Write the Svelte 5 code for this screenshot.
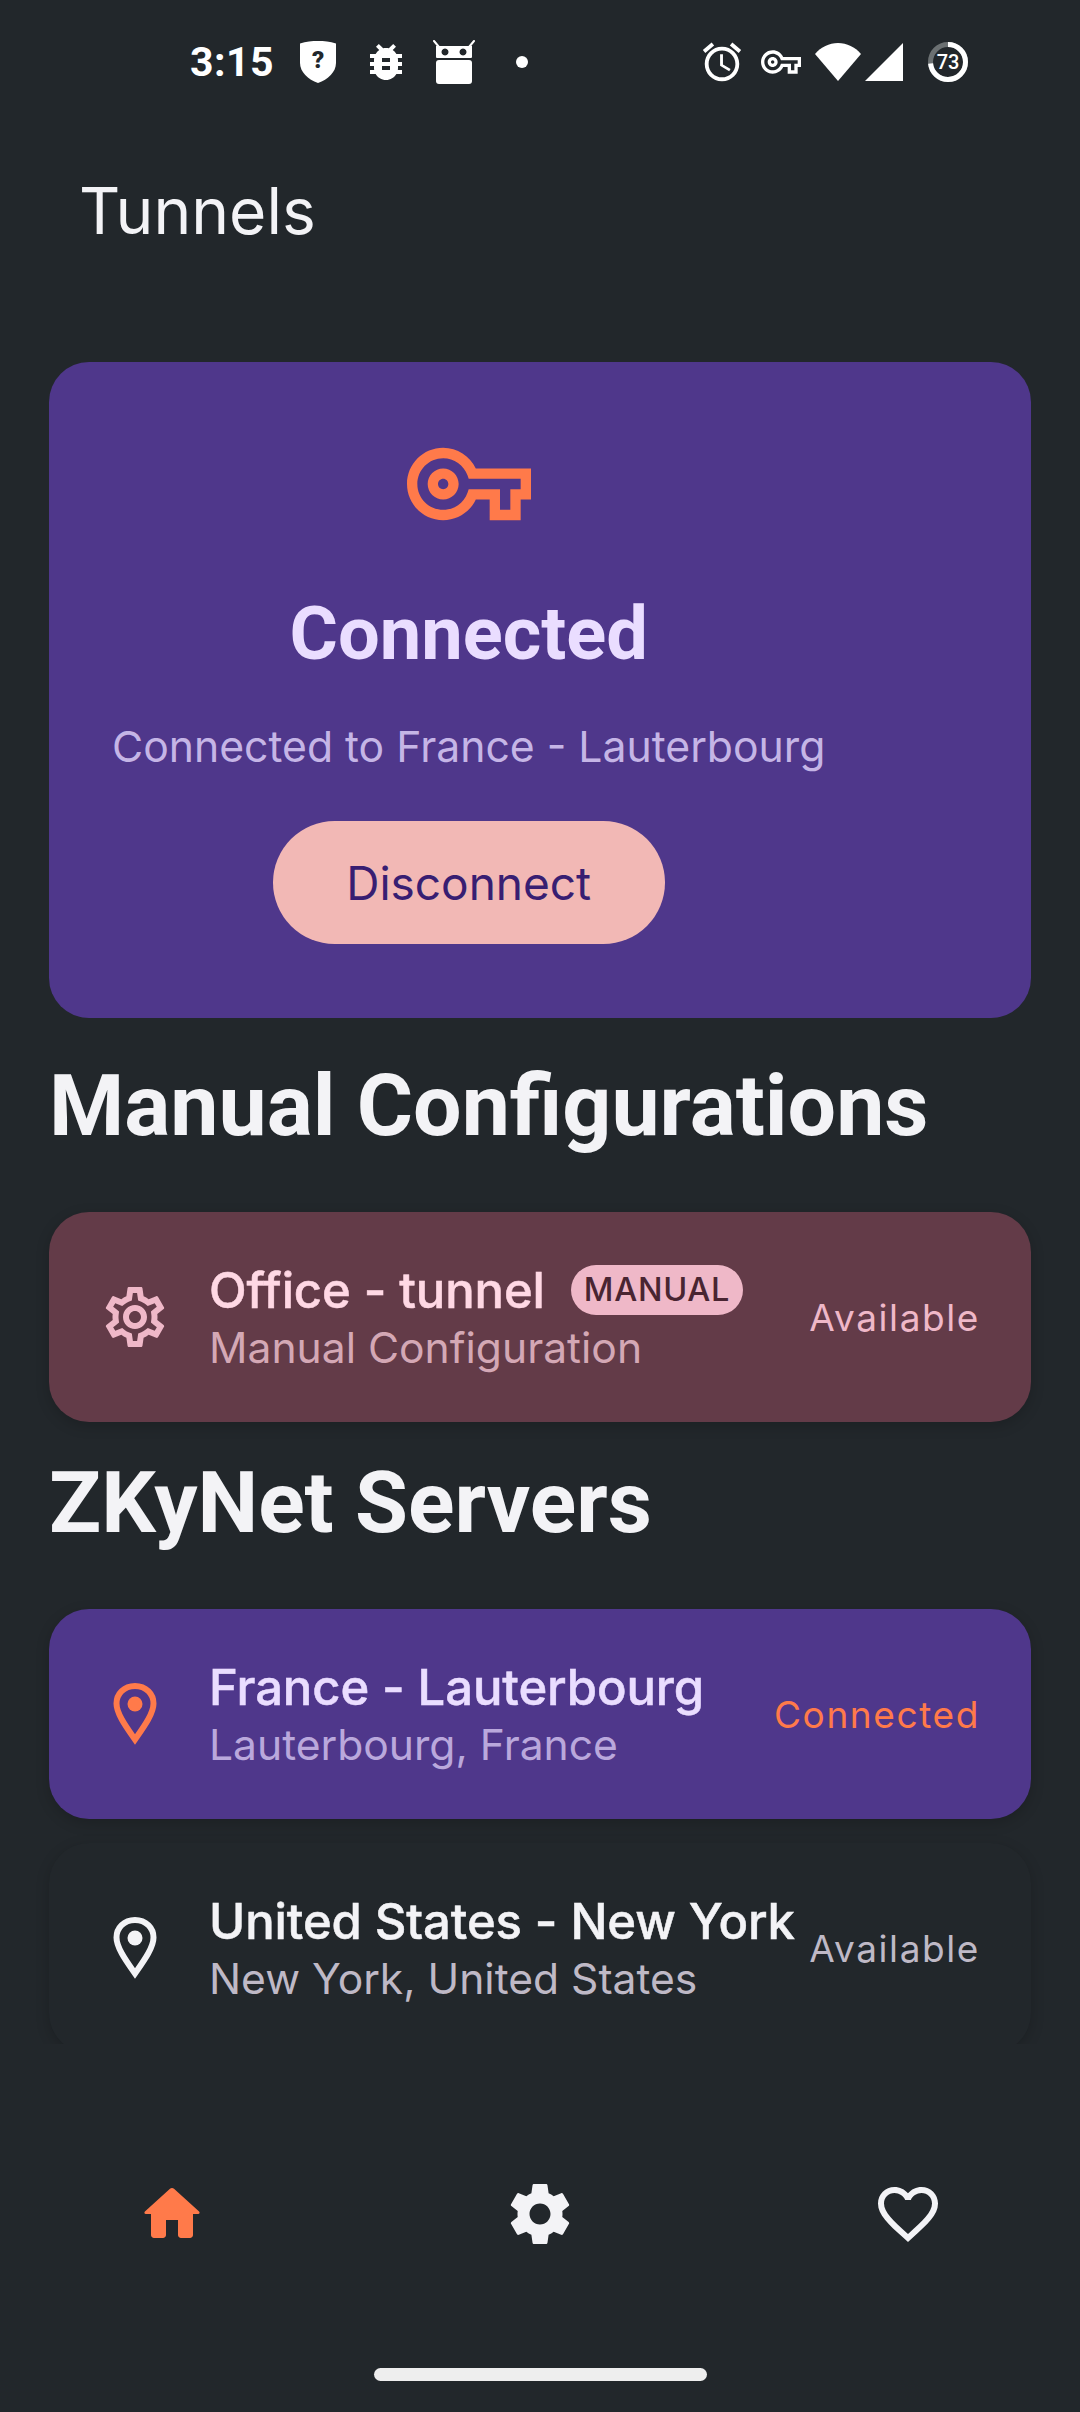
<script>
   // gear outline shared by the manual row and the bottom nav
   const gearOuter = "M19.43 12.98c.04-.32.07-.64.07-.98 0-.34-.03-.66-.07-.98l2.11-1.65c.19-.15.24-.42.12-.64l-2-3.46c-.09-.16-.26-.25-.44-.25-.06 0-.12.01-.17.03l-2.49 1c-.52-.4-1.08-.73-1.69-.98l-.38-2.65C14.46 2.18 14.25 2 14 2h-4c-.25 0-.46.18-.49.42l-.38 2.65c-.61.25-1.17.59-1.69.98l-2.49-1c-.06-.02-.12-.03-.18-.03-.17 0-.34.09-.43.25l-2 3.46c-.13.22-.07.49.12.64l2.11 1.65c-.04.32-.07.65-.07.98 0 .33.03.66.07.98l-2.11 1.65c-.19.15-.24.42-.12.64l2 3.46c.09.16.26.25.44.25.06 0 .12-.01.17-.03l2.49-1c.52.4 1.08.73 1.69.98l.38 2.65c.03.24.24.42.49.42h4c.25 0 .46-.18.49-.42l.38-2.65c.61-.25 1.17-.59 1.69-.98l2.49 1c.06.02.12.03.18.03.17 0 .34-.09.43-.25l2-3.46c.12-.22.07-.49-.12-.64l-2.11-1.65z";
   const gearInner = "M17.45 11.27c.04.31.05.52.05.73 0 .21-.02.43-.05.73l-.14 1.13.89.7 1.08.84-.7 1.21-1.27-.51-1.04-.42-.9.68c-.43.32-.84.56-1.25.73l-1.06.43-.16 1.13-.2 1.35h-1.4l-.19-1.35-.16-1.13-1.06-.43c-.43-.18-.83-.41-1.23-.71l-.91-.7-1.06.43-1.27.51-.7-1.21 1.08-.84.89-.7-.14-1.13c-.03-.31-.05-.54-.05-.74s.02-.43.05-.73l.14-1.13-.89-.7-1.08-.84.7-1.21 1.27.51 1.04.42.9-.68c.43-.32.84-.56 1.25-.73l1.06-.43.16-1.13.2-1.35h1.39l.19 1.35.16 1.13 1.06.43c.43.18.83.41 1.23.71l.91.7 1.06-.43 1.27-.51.7 1.21-1.07.85-.89.7.14 1.13zM12 8c-2.21 0-4 1.79-4 4s1.79 4 4 4 4-1.79 4-4-1.79-4-4-4zm0 6c-1.1 0-2-.9-2-2s.9-2 2-2 2 .9 2 2-.9 2-2 2z";
   const keyPath = "M22 19h-6v-4h-2.68c-1.14 2.42-3.6 4-6.32 4-3.86 0-7-3.14-7-7s3.14-7 7-7c2.72 0 5.17 1.58 6.32 4H24v6h-2v4zm-4-2h2v-4h2v-2H11.94l-.23-.67C11.01 8.34 9.11 7 7 7c-2.76 0-5 2.24-5 5s2.24 5 5 5c2.11 0 4.01-1.34 4.71-3.33l.23-.67H18v4zM7 15c-1.65 0-3-1.35-3-3s1.35-3 3-3 3 1.35 3 3-1.35 3-3 3zm0-4c-.55 0-1 .45-1 1s.45 1 1 1 1-.45 1-1-.45-1-1-1z";

   const battery = 73;
   const batteryCirc = 2 * Math.PI * 17.5;

   const servers = [
      { name: "France - Lauterbourg", place: "Lauterbourg, France", status: "Connected", active: true },
      { name: "United States - New York", place: "New York, United States", status: "Available", active: false },
   ];
</script>

<div class="screen">
   <!-- status bar -->
   <div class="statusBar">
      <div class="statusLeft">
         <span class="time">3:15</span>
         <svg class="shield" width="36" height="42" viewBox="0 0 36 42">
            <path fill="#fff" d="M18 0C24 0 30 .6 36 2.5V22C36 31 28 38.5 18 42 8 38.5 0 31 0 22V2.5C6 .6 12 0 18 0z"/>
            <text x="18" y="27" text-anchor="middle" class="shieldMark">?</text>
         </svg>
         <svg class="bug" width="48" height="48" viewBox="0 0 24 24">
            <path fill="#fff" d="M20 8h-2.81c-.45-.78-1.07-1.45-1.82-1.96L17 4.41 15.59 3l-2.17 2.17C12.96 5.06 12.49 5 12 5c-.49 0-.96.06-1.41.17L8.41 3 7 4.41l1.62 1.63C7.88 6.55 7.26 7.22 6.81 8H4v2h2.09c-.05.33-.09.66-.09 1v1H4v2h2v1c0 .34.04.67.09 1H4v2h2.81c1.04 1.79 2.97 3 5.19 3s4.15-1.21 5.19-3H20v-2h-2.09c.05-.33.09-.66.09-1v-1h2v-2h-2v-1c0-.34-.04-.67-.09-1H20V8zm-6 8h-4v-2h4v2zm0-4h-4v-2h4v2z"/>
         </svg>
         <svg class="droid" width="44" height="44" viewBox="0 0 44 44">
            <path stroke="#fff" stroke-width="2" stroke-linecap="round" d="M2 1l5 6M42 1l-5 6"/>
            <path fill="#fff" fill-rule="evenodd" d="M4 6h36v11a1 1 0 0 1-1 1H5a1 1 0 0 1-1-1zM13 8.500a3.500 3.500 0 1 0 .01 0zM31 8.500a3.500 3.500 0 1 0 .01 0z"/>
            <rect fill="#fff" x="4" y="20" width="36" height="24" rx="3"/>
         </svg>
         <span class="dot"></span>
      </div>
      <div class="statusRight">
         <svg width="46" height="46" viewBox="0 0 24 24">
            <path fill="#fff" d="M22 5.720l-4.600-3.860-1.290 1.530 4.600 3.860L22 5.720zM7.880 3.390L6.600 1.860 2 5.710l1.290 1.530 4.590-3.850zM12.500 8H11v6l4.750 2.850.75-1.230-4-2.370V8zM12 4c-4.970 0-9 4.030-9 9s4.030 9 9 9c4.970 0 9-4.030 9-9s-4.030-9-9-9zm0 16c-3.870 0-7-3.130-7-7s3.130-7 7-7 7 3.130 7 7-3.130 7-7 7z"/>
         </svg>
         <svg class="statusKey" width="40" height="40" viewBox="0 0 24 24">
            <path fill="#fff" d={keyPath}/>
         </svg>
         <svg class="wifi" width="46" height="38" viewBox="0 0 46 38">
            <path fill="#fff" d="M23 38L0 11C6 4 14 0 23 0s17 4 23 11z"/>
         </svg>
         <svg class="signal" width="38" height="38" viewBox="0 0 38 38">
            <path fill="#fff" d="M38 0v38H0z"/>
         </svg>
         <svg class="battery" width="40" height="40" viewBox="0 0 40 40">
            <circle cx="20" cy="20" r="17.500" fill="none" stroke="#6b7072" stroke-width="5"/>
            <circle cx="20" cy="20" r="17.500" fill="none" stroke="#fff" stroke-width="5"
               stroke-dasharray="{batteryCirc * battery / 100} {batteryCirc}" transform="rotate(-90 20 20)"/>
            <text x="20" y="27" text-anchor="middle" class="batteryText">{battery}</text>
         </svg>
      </div>
   </div>

   <h1 class="title">Tunnels</h1>

   <div class="content">
      <!-- connection status -->
      <div class="statusCard">
         <div class="statusCol">
            <svg class="cardKey" width="124" height="124" viewBox="0 0 24 24">
               <path d={keyPath}/>
            </svg>
            <div class="statusHead">Connected</div>
            <div class="statusSub">Connected to France - Lauterbourg</div>
            <button class="disconnect">Disconnect</button>
         </div>
      </div>

      <h2 class="sectionHead">Manual Configurations</h2>

      <div class="row manual">
         <svg class="rowIcon" width="72" height="72" viewBox="0 0 24 24">
            <path d={gearOuter + gearInner} fill-rule="nonzero"/>
         </svg>
         <div class="rowText">
            <div class="rowName">Office - tunnel<span class="badge">MANUAL</span></div>
            <div class="rowSub">Manual Configuration</div>
         </div>
         <div class="rowStatus">Available</div>
      </div>

      <h2 class="sectionHead second">ZKyNet Servers</h2>

      {#each servers as server}
         <div class="row" class:active={server.active} class:plain={!server.active}>
            <svg class="rowIcon pin" width="72" height="72" viewBox="0 0 72 72">
               <path class="pinLine" d="M36 8C25 8 17.500 16 17.500 25.500 17.500 36 28 50 36 61.500 44 50 54.500 36 54.500 25.500 54.500 16 47 8 36 8z"/>
               <circle class="pinDot" cx="36" cy="26" r="7.500"/>
            </svg>
            <div class="rowText">
               <div class="rowName">{server.name}</div>
               <div class="rowSub">{server.place}</div>
            </div>
            <div class="rowStatus">{server.status}</div>
         </div>
      {/each}
   </div>

   <!-- bottom nav -->
   <div class="nav">
      <svg width="72" height="72" viewBox="0 0 24 24">
         <path fill="#ff7a4a" d="M10 19v-5h4v5c0 .55.45 1 1 1h3c.55 0 1-.45 1-1v-7h1.700c.46 0 .68-.57.33-.87L12.670 3.600c-.38-.34-.96-.34-1.340 0l-8.360 7.530c-.34.3-.13.87.33.87H5v7c0 .55.45 1 1 1h3c.55 0 1-.45 1-1z"/>
      </svg>
      <svg width="72" height="72" viewBox="0 0 24 24">
         <path fill="#f3f3f6" fill-rule="evenodd" d={gearOuter + "M12 15.500c-1.930 0-3.500-1.570-3.500-3.500s1.570-3.500 3.500-3.500 3.500 1.570 3.500 3.500-1.570 3.500-3.500 3.500z"}/>
      </svg>
      <svg width="72" height="72" viewBox="0 0 24 24">
         <path fill="#f3f3f6" d="M16.500 3c-1.740 0-3.410.81-4.500 2.090C10.910 3.810 9.240 3 7.500 3 4.420 3 2 5.420 2 8.500c0 3.780 3.400 6.860 8.550 11.540L12 21.350l1.450-1.320C18.600 15.360 22 12.280 22 8.500 22 5.420 19.580 3 16.500 3zm-4.400 15.550l-.1.100-.1-.1C7.140 14.240 4 11.390 4 8.500 4 6.500 5.500 5 7.500 5c1.540 0 3.040.99 3.570 2.360h1.870C13.460 5.990 14.960 5 16.500 5c2 0 3.500 1.500 3.500 3.500 0 2.890-3.140 5.740-7.900 10.050z"/>
      </svg>
   </div>

   <div class="homeBar"></div>
</div>

<style>
   :global(body) {
      background: #22272b;
   }

   .screen {
      display: flex;
      flex-direction: column;
      width: 1080px;
      height: 2412px;
      overflow: hidden;
      background: #22272b;
      font-family: Inter, "Liberation Sans", sans-serif;
   }

   /* status bar */
   .statusBar {
      display: flex;
      justify-content: space-between;
      align-items: center;
      height: 124px;
      flex: none;
      padding: 0 112px 0 190px;
      box-sizing: border-box;
   }

   .statusLeft, .statusRight {
      display: flex;
      align-items: center;
   }

   .time {
      width: 84px;
      color: #fff;
      font: 700 41px Roboto, sans-serif;
      letter-spacing: .5px;
   }

   .shield { margin-left: 26px; }
   .bug { margin-left: 26px; }
   .droid { margin-left: 22px; }

   .shieldMark {
      fill: #22272b;
      font: 900 24px Roboto, sans-serif;
   }

   .dot {
      width: 12px;
      height: 12px;
      margin-left: 40px;
      border-radius: 50%;
      background: #fff;
   }

   .statusKey { margin-left: 16px; }
   .wifi { margin-left: 14px; }
   .signal { margin-left: 4px; }
   .battery { margin-left: 25px; }

   .batteryText {
      fill: #fff;
      font: 500 20px Roboto, sans-serif;
   }

   .title {
      margin: 0;
      height: 238px;
      flex: none;
      padding: 48px 0 0 79px;
      box-sizing: border-box;
      color: #f3f3f6;
      font-size: 64px;
      line-height: 78px;
      font-weight: 400;
   }

   .content {
      display: flex;
      flex-direction: column;
      flex: none;
      height: 1682px;
      padding: 0 49px;
      overflow: hidden;
   }

   /* connection card */
   .statusCard {
      flex: none;
      height: 656px;
      padding: 60px 63px 0;
      box-sizing: border-box;
      border-radius: 40px;
      background: #4f378b;
   }

   .statusCol {
      display: inline-flex;
      flex-direction: column;
      align-items: center;
   }

   .cardKey { fill: #ff7a4a; }

   .statusHead {
      margin-top: 46px;
      color: #eaddff;
      font-size: 74px;
      line-height: 84px;
      font-weight: 700;
      font-family: Roboto, sans-serif;
   }

   .statusSub {
      margin-top: 45px;
      color: #c5b5e6;
      font-size: 42.700px;
      line-height: 52px;
   }

   .disconnect {
      width: 392px;
      height: 123px;
      margin-top: 48px;
      border: none;
      border-radius: 62px;
      background: #f2b8b5;
      color: #381e72;
      font: 400 46px Inter, sans-serif;
   }

   .sectionHead {
      flex: none;
      margin: 0;
      padding: 28px 0 46px;
      color: #f3f3f6;
      font-family: Roboto, sans-serif;
      font-size: 86px;
      line-height: 120px;
      font-weight: 700;
   }

   .second {
      padding: 21px 0 46px;
   }

   /* list rows */
   .row {
      display: flex;
      align-items: center;
      flex: none;
      height: 210px;
      padding: 0 51px 0 50px;
      box-sizing: border-box;
      border-radius: 40px;
      box-shadow: 0 4px 14px rgba(0, 0, 0, .18);
   }

   .row + .row { margin-top: 24px; }

   .rowIcon { flex: none; }

   .rowText {
      flex: 1;
      min-width: 0;
      margin-left: 38px;
      padding-top: 3px;
   }

   .rowName {
      display: flex;
      align-items: center;
      gap: 0 26px;
      font-size: 49px;
      line-height: 57px;
      font-weight: 500;
      letter-spacing: -.1px;
      -webkit-text-stroke: .5px currentColor;
      white-space: pre;
   }

   .rowSub {
      font-size: 42.600px;
      line-height: 57px;
   }

   .rowStatus {
      flex: none;
      font-size: 37px;
      letter-spacing: 1.600px;
   }

   .badge {
      height: 50px;
      padding: 0 13px;
      border-radius: 25px;
      background: #efb8c8;
      color: #492532;
      font-size: 32.500px;
      line-height: 50px;
      font-weight: 500;
      letter-spacing: .7px;
      -webkit-text-stroke: 0;
   }

   .manual { background: #633b48; }
   .manual .rowIcon { fill: #efb8c8; }
   .manual .rowName { color: #ffd8e4; }
   .manual .rowSub { color: #d4a8b5; }
   .manual .rowStatus { color: #efb8c8; }

   .pinLine {
      fill: none;
      stroke-width: 6px;
      stroke-linejoin: miter;
   }

   .active { background: #4f378b; }
   .active .pinLine { stroke: #ff7a4a; }
   .active .pinDot { fill: #ff7a4a; }
   .active .rowName { color: #eaddff; }
   .active .rowSub { color: #baa8dc; }
   .active .rowStatus { color: #ff7a4a; }

   .plain { background: #22272b; }
   .plain .pinLine { stroke: #f3f3f6; }
   .plain .pinDot { fill: #f3f3f6; }
   .plain .rowName { color: #f3f3f6; }
   .plain .rowSub { color: #bfb9c6; }
   .plain .rowStatus { color: #bfb9c6; }

   /* bottom nav */
   .nav {
      display: flex;
      justify-content: space-between;
      flex: none;
      padding: 134px 136px 0;
   }

   .homeBar {
      width: 333px;
      height: 13px;
      margin: 118px auto 0;
      border-radius: 7px;
      background: #eee;
   }
</style>
